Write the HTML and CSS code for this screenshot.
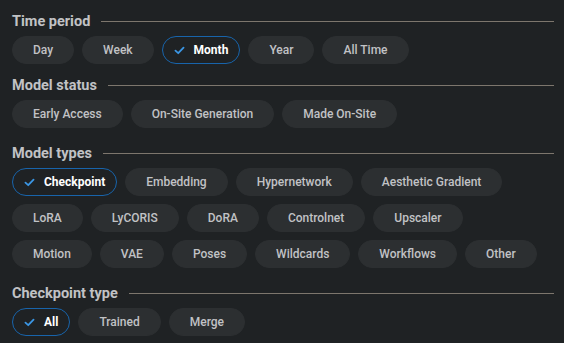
FILE: index.html
```html
<!DOCTYPE html>
<html lang="en">
<head>
    <meta charset="UTF-8">
    <meta name="viewport" content="width=device-width, initial-scale=1.0">
    <title>Filters</title>
    <link rel="stylesheet" href="styles.css">
</head>
<body>
    <div class="filters">
        <div class="group">
            <div class="group-title">Time period</div>
            <div class="chips">
                <span class="chip">Day</span>
                <span class="chip">Week</span>
                <span class="chip checked"><svg class="check" viewBox="0 0 12 10"><polyline points="1.5,5.2 4.6,8 10.5,1.8"/></svg>Month</span>
                <span class="chip">Year</span>
                <span class="chip">All Time</span>
            </div>
        </div>

        <div class="group">
            <div class="group-title">Model status</div>
            <div class="chips">
                <span class="chip">Early Access</span>
                <span class="chip">On-Site Generation</span>
                <span class="chip">Made On-Site</span>
            </div>
        </div>

        <div class="group">
            <div class="group-title">Model types</div>
            <div class="chips">
                <span class="chip checked"><svg class="check" viewBox="0 0 12 10"><polyline points="1.5,5.2 4.6,8 10.5,1.8"/></svg>Checkpoint</span>
                <span class="chip">Embedding</span>
                <span class="chip">Hypernetwork</span>
                <span class="chip">Aesthetic Gradient</span>
                <span class="chip">LoRA</span>
                <span class="chip">LyCORIS</span>
                <span class="chip">DoRA</span>
                <span class="chip">Controlnet</span>
                <span class="chip">Upscaler</span>
                <span class="chip">Motion</span>
                <span class="chip">VAE</span>
                <span class="chip">Poses</span>
                <span class="chip">Wildcards</span>
                <span class="chip">Workflows</span>
                <span class="chip">Other</span>
            </div>
        </div>

        <div class="group">
            <div class="group-title">Checkpoint type</div>
            <div class="chips">
                <span class="chip checked"><svg class="check" viewBox="0 0 12 10"><polyline points="1.5,5.2 4.6,8 10.5,1.8"/></svg>All</span>
                <span class="chip">Trained</span>
                <span class="chip">Merge</span>
            </div>
        </div>
    </div>
</body>
</html>
```

FILE: styles.css
```css
body {
    margin: 0;
    background-color: #1f2224;
    color: #c1c2c5;
    font-family: Roboto, Arial, sans-serif;
}

.filters {
    padding: 11px 10px 0 12px;
    display: flex;
    flex-direction: column;
    gap: 15px;
}

/* первая группа стоит чуть плотнее к следующей */
.group:first-child {
    margin-bottom: -4px;
}

.group-title {
    display: flex;
    align-items: center;
    gap: 11px;
    height: 20px;
    font-size: 14.5px;
    font-weight: 700;
    color: #c1c2c5;
    margin-bottom: 5px;
}

.group-title::after {
    content: '';
    flex: 1;
    height: 1px;
    background-color: #7d766d;
}

.chips {
    display: flex;
    flex-wrap: wrap;
    gap: 8px;
    padding-right: 12px;
}

.chip {
    display: inline-flex;
    align-items: center;
    height: 28px;
    box-sizing: border-box;
    padding: 0 20px;
    border-radius: 14px;
    background-color: #2c2f31;
    border: 1px solid #2c2f31;
    font-size: 12px;
    font-weight: 500;
    white-space: nowrap;
}

.chip.checked {
    background-color: transparent;
    border-color: #1864ab;
    color: #ffffff;
    font-weight: 700;
    padding: 0 11px;
}

.check {
    width: 11px;
    height: 9px;
    margin-right: 9px;
    fill: none;
    stroke: #3b96e4;
    stroke-width: 2;
    stroke-linecap: round;
    stroke-linejoin: round;
}
```
